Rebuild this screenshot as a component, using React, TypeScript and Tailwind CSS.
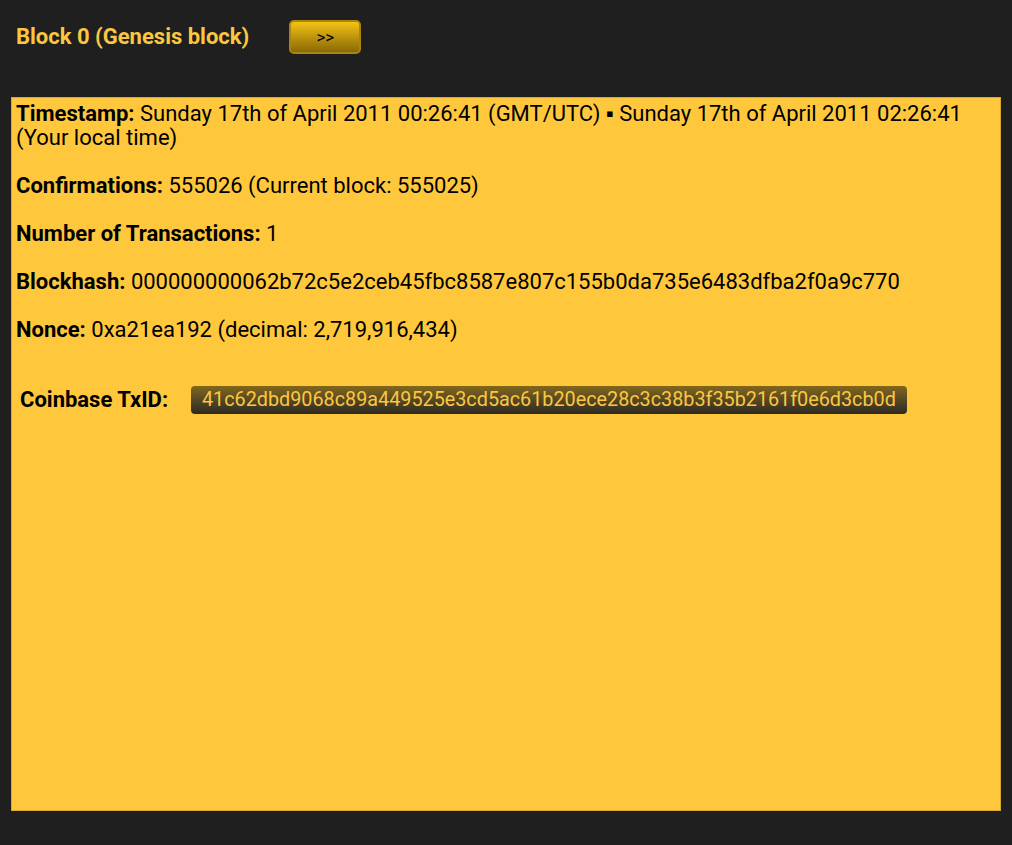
export default function App() {
  return (
    <div className="min-h-[845px] bg-[#1f1f1f] font-['Roboto',sans-serif] pt-[20px] px-[11px]">
      <div className="flex items-center h-[34px] pl-[5px]">
        <h1 className="text-[22px] font-bold text-[#fcc73f] leading-none">Block 0 (Genesis block)</h1>
        <button
          type="button"
          className="ml-[40px] w-[72px] h-[34px] rounded-[5px] border-2 border-[#a88510] bg-gradient-to-b from-[#f5c217] to-[#8a6a05] text-[17px] text-black leading-none"
        >
          &gt;&gt;
        </button>
      </div>

      <div className="mt-[43px] h-[714px] border border-[#d9a92f] bg-[#ffc83c] pt-[4px] px-[4px] text-[22px] leading-[24px] text-black">
        <p>
          <b>Timestamp:</b> Sunday 17th of April 2011 00:26:41 (GMT/UTC) ▪ Sunday 17th of April 2011 02:26:41 (Your local time)
        </p>
        <br />
        <p>
          <b>Confirmations:</b> 555026 (Current block: 555025)
        </p>
        <br />
        <p>
          <b>Number of Transactions:</b> 1
        </p>
        <br />
        <p>
          <b>Blockhash:</b> 000000000062b72c5e2ceb45fbc8587e807c155b0da735e6483dfba2f0a9c770
        </p>
        <br />
        <p>
          <b>Nonce:</b> 0xa21ea192 (decimal: 2,719,916,434)
        </p>

        <div className="mt-[44px] flex items-center pl-[4px]">
          <span className="font-bold w-[171px]">Coinbase TxID:</span>
          <span className="h-[28px] flex items-center px-[11px] rounded-[4px] bg-gradient-to-b from-[#826718] to-[#2e2a22] text-[#fcc73f] text-[19.8px]">
            41c62dbd9068c89a449525e3cd5ac61b20ece28c3c38b3f35b2161f0e6d3cb0d
          </span>
        </div>
      </div>
    </div>
  );
}
